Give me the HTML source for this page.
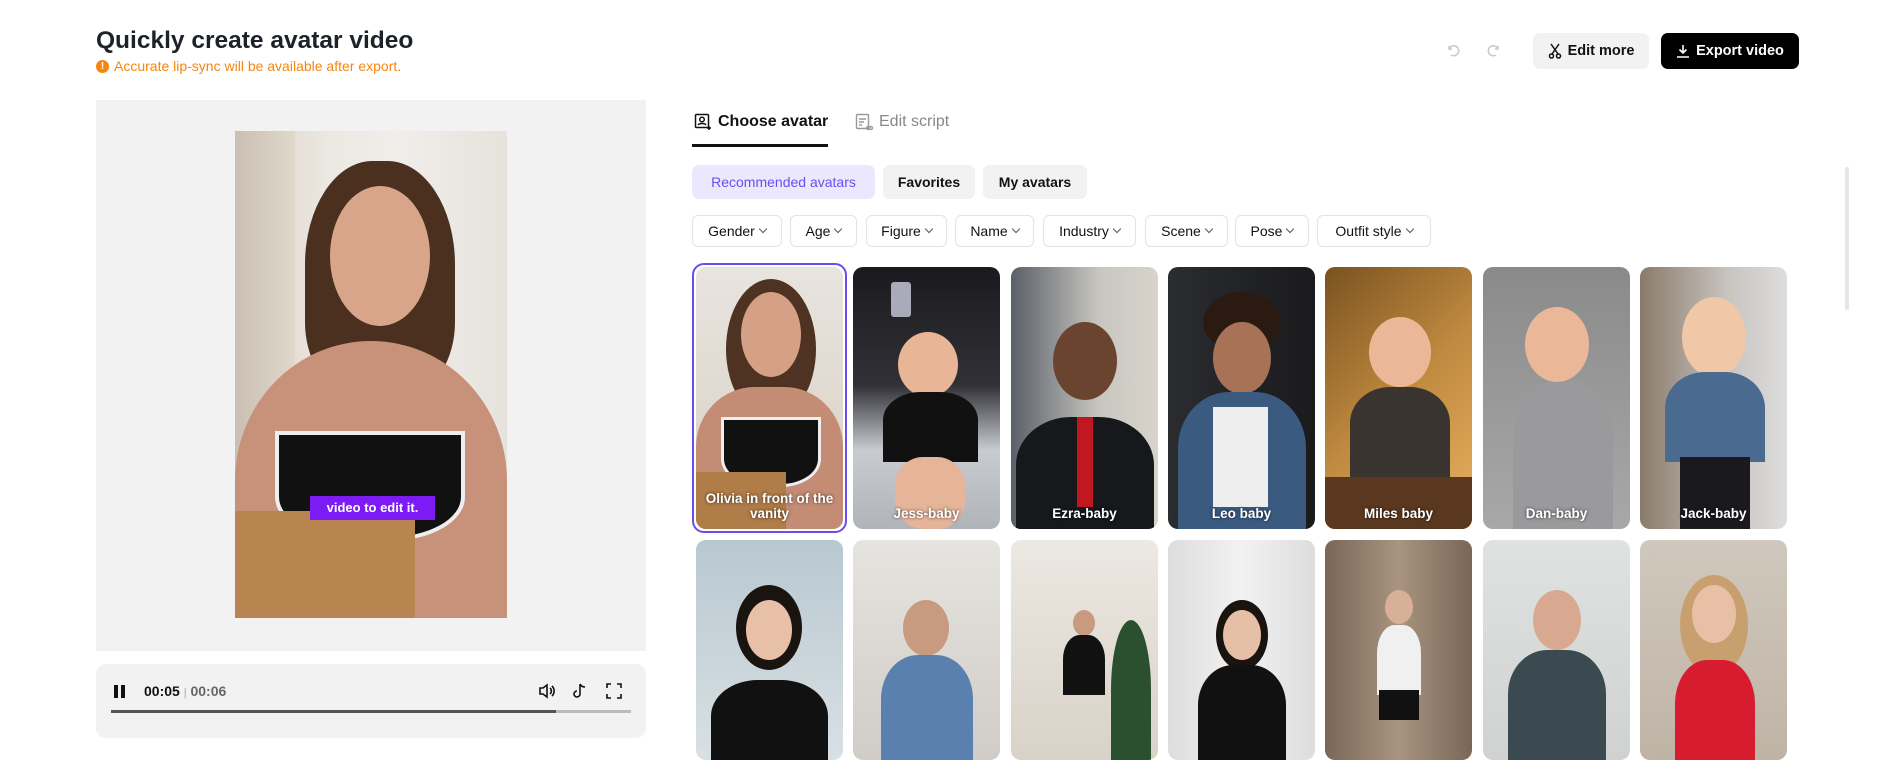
<!DOCTYPE html>
<html><head><meta charset="utf-8"><style>
*{box-sizing:border-box;margin:0;padding:0}
body{width:1900px;height:745px;overflow:hidden;background:#fff;font-family:"Liberation Sans",sans-serif;position:relative;color:#111}
.a{position:absolute}
.title{left:96px;top:27px;font-size:24.5px;font-weight:bold;color:#1d2129}
.warn{left:96px;top:58px;font-size:14px;color:#f7860f;display:flex;align-items:center;gap:5px}
.warn i{width:13px;height:13px;border-radius:50%;background:#f7860f;color:#fff;font-style:normal;font-size:10px;font-weight:bold;text-align:center;line-height:13px}
.btn{top:33px;height:36px;border-radius:7px;font-size:14.5px;font-weight:bold;display:flex;align-items:center;justify-content:center;gap:6px}
.panel{left:96px;top:100px;width:550px;height:551px;background:#f2f2f2}
.video{left:235px;top:131px;width:272px;height:487px;overflow:hidden;background:linear-gradient(90deg,#d8d0c6 0%,#ece8e2 35%,#f0eeea 60%,#e6e2dc 100%)}
.ctrl{left:96px;top:664px;width:550px;height:74px;background:#f2f2f2;border-radius:10px}
.tab{top:113px;font-size:16px;font-weight:bold;display:flex;align-items:center;gap:6px}
.chip{top:165px;height:34px;border-radius:7px;font-size:14px;font-weight:bold;display:flex;align-items:center;justify-content:center;background:#f2f2f2}
.f{top:215px;height:32px;border:1px solid #e3e3e3;border-radius:6px;font-size:14px;display:flex;align-items:center;justify-content:center;gap:5px}
.f:after{content:"";width:5px;height:5px;border-right:1.2px solid #555;border-bottom:1.2px solid #555;transform:rotate(45deg);margin-top:-4px}
.card{width:147px;height:262px;border-radius:10px;overflow:hidden;top:267px}
.card b{position:absolute;bottom:8px;left:4px;right:4px;text-align:center;color:#fff;font-size:13.5px;text-shadow:0 0 3px rgba(0,0,0,.7)}
.r2{top:540px;height:220px}
.head{position:absolute;border-radius:50%}
.body{position:absolute;border-radius:40% 40% 0 0}
</style></head><body>
<div class="a title">Quickly create avatar video</div>
<div class="a warn"><i>!</i>Accurate lip-sync will be available after export.</div>

<svg class="a" style="left:1445px;top:43px" width="16" height="16" viewBox="0 0 16 16" fill="none" stroke="#c8c8c8" stroke-width="1.5"><path d="M4 3v3h3M4 6a5 5 0 1 1 2 6"/></svg>
<svg class="a" style="left:1486px;top:43px" width="16" height="16" viewBox="0 0 16 16" fill="none" stroke="#c8c8c8" stroke-width="1.5"><path d="M12 3v3H9M12 6a5 5 0 1 0-2 6"/></svg>
<div class="a btn" style="left:1533px;width:116px;background:#f2f2f2;color:#111"><svg width="14" height="16" viewBox="0 0 14 16" fill="none" stroke="#111" stroke-width="1.5"><path d="M3 1l7 10M11 1L4 11"/><circle cx="3.5" cy="13" r="2"/><circle cx="10.5" cy="13" r="2"/></svg>Edit more</div>
<div class="a btn" style="left:1661px;width:138px;background:#000;color:#fff"><svg width="14" height="14" viewBox="0 0 14 14" fill="none" stroke="#fff" stroke-width="1.6"><path d="M7 1v8M3.5 5.5L7 9l3.5-3.5M1 13h12"/></svg>Export video</div>

<div class="a panel"></div>
<div class="a video">
  <div class="a" style="left:0;top:0;width:60px;height:487px;background:linear-gradient(90deg,#c9bfb2,#e0d8cc)"></div>
  <div class="head" style="left:70px;top:30px;width:150px;height:230px;background:#4b3020;border-radius:45% 45% 30% 30%"></div>
  <div class="head" style="left:95px;top:55px;width:100px;height:140px;background:#d9a58a"></div>
  <div class="body" style="left:0px;top:210px;width:272px;height:280px;background:#c8917a;border-radius:50% 50% 0 0"></div>
  <div class="a" style="left:40px;top:300px;width:190px;height:110px;background:#111;border:4px solid #eee;border-radius:0 0 40% 40%"></div>
  <div class="a" style="left:0;top:380px;width:180px;height:107px;background:#b88450"></div>
  <div class="a" style="left:75px;top:365px;width:125px;height:24px;background:#7d1bf5;color:#fff;font-size:13px;font-weight:bold;text-align:center;line-height:24px">video to edit it.</div>
</div>

<div class="a ctrl">
  <div class="a" style="left:18px;top:21px;width:4px;height:13px;background:#111"></div>
  <div class="a" style="left:25px;top:21px;width:4px;height:13px;background:#111"></div>
  <div class="a" style="left:48px;top:19px;font-size:14px;font-weight:bold">00:05 <span style="color:#aaa;font-weight:normal;font-size:11px">|</span> <span style="color:#666">00:06</span></div>
  <svg class="a" style="left:442px;top:19px" width="18" height="16" viewBox="0 0 18 16" fill="none" stroke="#111" stroke-width="1.6"><path d="M2 5h3l4-3v12l-4-3H2z M12 5a4 4 0 0 1 0 6M14 3a7 7 0 0 1 0 10"/></svg>
  <svg class="a" style="left:476px;top:18px" width="16" height="18" viewBox="0 0 16 18" fill="none" stroke="#111" stroke-width="1.6"><path d="M8 2v10a3 3 0 1 1-3-3M8 2c1 2 3 3 5 3"/></svg>
  <svg class="a" style="left:510px;top:19px" width="16" height="16" viewBox="0 0 16 16" fill="none" stroke="#111" stroke-width="1.6"><path d="M1 5V1h4M11 1h4v4M15 11v4h-4M5 15H1v-4"/></svg>
  <div class="a" style="left:15px;top:46px;width:445px;height:3px;background:#555"></div>
  <div class="a" style="left:460px;top:46px;width:75px;height:3px;background:#bbb"></div>
</div>

<div class="a tab" style="left:694px"><svg width="18" height="18" viewBox="0 0 18 18" fill="none" stroke="#111" stroke-width="1.5"><rect x="1.5" y="1.5" width="13" height="13" rx="1"/><circle cx="8" cy="6.5" r="2.3"/><path d="M4 12c1-2 7-2 8 0M15 13v4M13 15h4"/></svg>Choose avatar</div>
<div class="a" style="left:692px;top:144px;width:136px;height:3px;background:#111"></div>
<div class="a tab" style="left:855px;color:#888;font-weight:normal"><svg width="18" height="18" viewBox="0 0 18 18" fill="none" stroke="#999" stroke-width="1.4"><rect x="1.5" y="1.5" width="12" height="14" rx="1"/><path d="M4 6h7M4 9h5M4 12h3"/><circle cx="13" cy="15" r="1.5"/><circle cx="16" cy="15" r="1.5"/></svg>Edit script</div>

<div class="a chip" style="left:692px;width:183px;background:#ebe7fd;color:#6c4ef0;font-weight:normal">Recommended avatars</div>
<div class="a chip" style="left:883px;width:92px">Favorites</div>
<div class="a chip" style="left:983px;width:104px">My avatars</div>

<div class="a f" style="left:692px;width:90px">Gender</div>
<div class="a f" style="left:790px;width:67px">Age</div>
<div class="a f" style="left:866px;width:81px">Figure</div>
<div class="a f" style="left:955px;width:79px">Name</div>
<div class="a f" style="left:1043px;width:93px">Industry</div>
<div class="a f" style="left:1145px;width:83px">Scene</div>
<div class="a f" style="left:1235px;width:74px">Pose</div>
<div class="a f" style="left:1317px;width:114px">Outfit style</div>

<div class="a" style="left:1845px;top:167px;width:4px;height:143px;background:#e6e6e6;border-radius:2px"></div>

<div class="a" style="left:692px;top:263px;width:155px;height:270px;border:2px solid #6a4cf0;border-radius:12px"></div>
<div class="a card" style="left:696px;background:linear-gradient(#e8e4de,#d8cfc4)"><div class="head" style="left:30px;top:12px;width:90px;height:140px;background:#4e3222"></div><div class="head" style="left:45px;top:25px;width:60px;height:85px;background:#d6a086"></div><div class="body" style="left:0;top:120px;width:147px;height:150px;background:#c48c74"></div><div class="a" style="left:25px;top:150px;width:100px;height:70px;background:#111;border:3px solid #eee;border-radius:0 0 40% 40%"></div><div class="a" style="left:0;top:205px;width:90px;height:57px;background:#b07c48"></div><b>Olivia in front of the vanity</b></div>
<div class="a card" style="left:853px;background:linear-gradient(#1a1a1e,#303036 45%,#c8ccd0 70%,#b0b4b8)"><div class="head" style="left:45px;top:65px;width:60px;height:65px;background:#e8b696"></div><div class="body" style="left:30px;top:125px;width:95px;height:70px;background:#111"></div><div class="a" style="left:42px;top:190px;width:70px;height:72px;background:#e6b498;border-radius:40%"></div><div class="a" style="left:38px;top:15px;width:20px;height:35px;background:#aab;border-radius:3px"></div><b>Jess-baby</b></div>
<div class="a card" style="left:1011px;background:linear-gradient(90deg,#5a6068,#c8c6c0 60%,#d8d4cc)"><div class="head" style="left:42px;top:55px;width:64px;height:78px;background:#6a442e"></div><div class="body" style="left:5px;top:150px;width:138px;height:120px;background:#16181c"></div><div class="a" style="left:66px;top:150px;width:16px;height:90px;background:#c01820"></div><b>Ezra-baby</b></div>
<div class="a card" style="left:1168px;background:linear-gradient(90deg,#2a2c30,#1a1a1c)"><div class="head" style="left:35px;top:25px;width:78px;height:60px;background:#2a1a12"></div><div class="head" style="left:45px;top:55px;width:58px;height:72px;background:#a87256"></div><div class="body" style="left:10px;top:125px;width:128px;height:140px;background:#3a5a80"></div><div class="a" style="left:45px;top:140px;width:55px;height:100px;background:#eee"></div><b>Leo baby</b></div>
<div class="a card" style="left:1325px;background:linear-gradient(135deg,#7a5220,#c08a40 50%,#e8b060)"><div class="head" style="left:44px;top:50px;width:62px;height:70px;background:#eab896"></div><div class="body" style="left:25px;top:120px;width:100px;height:90px;background:#3a3430"></div><div class="a" style="left:0;top:210px;width:147px;height:52px;background:#5a3820"></div><b>Miles baby</b></div>
<div class="a card" style="left:1483px;background:linear-gradient(#8a8a8a,#a8a8a8)"><div class="head" style="left:42px;top:40px;width:64px;height:75px;background:#eab898"></div><div class="body" style="left:30px;top:115px;width:100px;height:150px;background:#9a9a9c"></div><b>Dan-baby</b></div>
<div class="a card" style="left:1640px;background:linear-gradient(90deg,#8a7a6a,#c8c4c0 60%,#ddd)"><div class="head" style="left:42px;top:30px;width:64px;height:80px;background:#f0c8a8"></div><div class="body" style="left:25px;top:105px;width:100px;height:90px;background:#4a6a90"></div><div class="a" style="left:40px;top:190px;width:70px;height:72px;background:#1a1a1e"></div><b>Jack-baby</b></div>

<div class="a card r2" style="left:696px;background:linear-gradient(#b8c8d0,#d8e0e4)"><div class="head" style="left:40px;top:45px;width:66px;height:85px;background:#1a1410"></div><div class="head" style="left:50px;top:60px;width:46px;height:60px;background:#e8c0a8"></div><div class="body" style="left:15px;top:140px;width:117px;height:90px;background:#111"></div></div>
<div class="a card r2" style="left:853px;background:linear-gradient(#e6e4e0,#d0ccc6)"><div class="head" style="left:50px;top:60px;width:46px;height:56px;background:#c89a80"></div><div class="body" style="left:28px;top:115px;width:92px;height:110px;background:#5a80b0"></div></div>
<div class="a card r2" style="left:1011px;background:linear-gradient(#ece8e2,#d8d2c8)"><div class="head" style="left:62px;top:70px;width:22px;height:26px;background:#c89a80"></div><div class="body" style="left:52px;top:95px;width:42px;height:60px;background:#111"></div><div class="a" style="left:100px;top:80px;width:40px;height:140px;background:#2a5030;border-radius:50% 50% 0 0"></div></div>
<div class="a card r2" style="left:1168px;background:linear-gradient(90deg,#ddd,#f2f2f2,#ddd)"><div class="head" style="left:48px;top:60px;width:52px;height:70px;background:#1a1410"></div><div class="head" style="left:55px;top:70px;width:38px;height:50px;background:#e6c0a6"></div><div class="body" style="left:30px;top:125px;width:88px;height:100px;background:#111"></div></div>
<div class="a card r2" style="left:1325px;background:linear-gradient(90deg,#7a6656,#a89480,#7a6656)"><div class="head" style="left:60px;top:50px;width:28px;height:34px;background:#d8b098"></div><div class="body" style="left:52px;top:85px;width:44px;height:70px;background:#f0f0f0"></div><div class="a" style="left:54px;top:150px;width:40px;height:30px;background:#111"></div></div>
<div class="a card r2" style="left:1483px;background:linear-gradient(#dfe2e0,#cfd2d0)"><div class="head" style="left:50px;top:50px;width:48px;height:60px;background:#d8a890"></div><div class="body" style="left:25px;top:110px;width:98px;height:110px;background:#3a4a50"></div></div>
<div class="a card r2" style="left:1640px;background:linear-gradient(#d0c8bc,#beb4a6)"><div class="head" style="left:40px;top:35px;width:68px;height:100px;background:#c8a070"></div><div class="head" style="left:52px;top:45px;width:44px;height:58px;background:#e8c0a6"></div><div class="body" style="left:35px;top:120px;width:80px;height:110px;background:#d81c30"></div></div>
</body></html>
